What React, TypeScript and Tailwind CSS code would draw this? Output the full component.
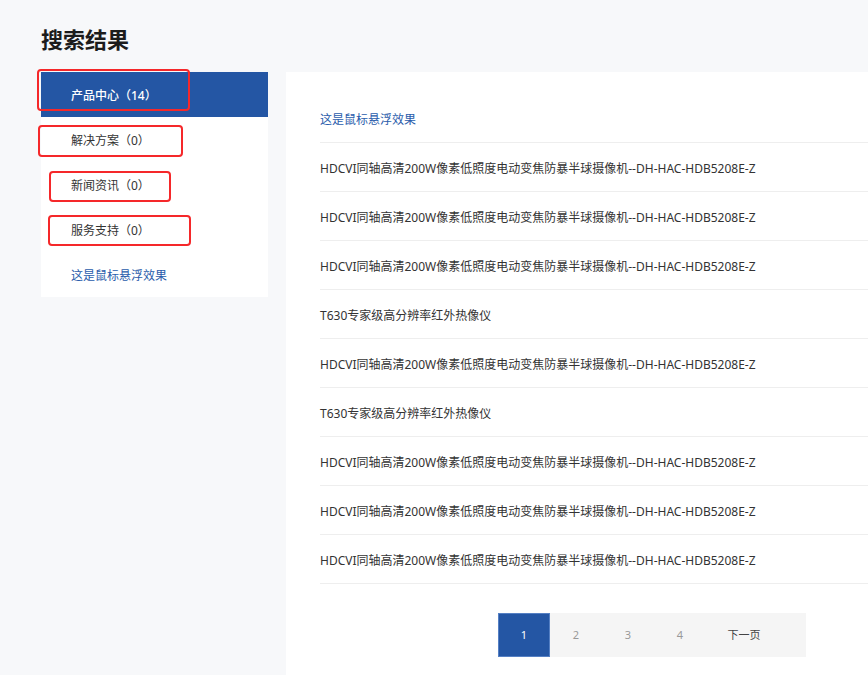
import React from 'react'

const categories = [
    { label: '产品中心（14）', active: true },
    { label: '解决方案（0）', active: false },
    { label: '新闻资讯（0）', active: false },
    { label: '服务支持（0）', active: false },
]

const camera = 'HDCVI同轴高清200W像素低照度电动变焦防暴半球摄像机--DH-HAC-HDB5208E-Z'
const thermal = 'T630专家级高分辨率红外热像仪'

const results = [camera, camera, camera, thermal, camera, thermal, camera, camera, camera]

// red annotation boxes drawn over the sidebar
const marks = [
    'left-[-4px] top-[-3px] w-[153px] h-[42px]',
    'left-[-3px] top-[53px] w-[145px] h-[32px]',
    'left-[8px] top-[99px] w-[122px] h-[31px]',
    'left-[7px] top-[143px] w-[143px] h-[31px]',
]

export default function App() {
    return (
        <div
            className="h-[675px] overflow-hidden bg-[#f7f8fa] pt-6 pl-[41px] text-[#333]"
            style={{ fontFamily: '"Noto Sans", "Noto Sans CJK SC", sans-serif' }}
        >
            <h1 className="mb-[18px] h-[30px] text-[22px] font-semibold leading-[30px] text-[#1c1c1c]">搜索结果</h1>
            <div className="flex items-start gap-[18px]">
                <div className="relative w-[227px] shrink-0 bg-white">
                    {categories.map((c) => (
                        <div
                            key={c.label}
                            className={
                                c.active
                                    ? 'flex h-[45px] items-center bg-[#2456a4] pt-[2px] pl-[30px] text-[12px] font-medium text-white'
                                    : 'flex h-[45px] items-center pt-[2px] pl-[30px] text-[12px]'
                            }
                        >
                            {c.label}
                        </div>
                    ))}
                    <div className="flex h-[45px] items-center pt-[2px] pl-[30px] text-[12px] text-[#2a5cab]">这是鼠标悬浮效果</div>
                    {marks.map((m) => (
                        <div key={m} className={'absolute rounded-[4px] border-2 border-[#f5282a] ' + m} />
                    ))}
                </div>
                <div className="min-w-0 flex-1 bg-white pt-[22px] pb-[20px] pl-[34px]">
                    <div className="flex h-[49px] items-center border-b border-[#eeeeee] pt-[3px] text-[12px] text-[#2a5cab]">
                        这是鼠标悬浮效果
                    </div>
                    {results.map((r, i) => (
                        <div
                            key={i}
                            className="flex h-[49px] items-center border-b border-[#eeeeee] pt-[3px] text-[12px] whitespace-nowrap"
                        >
                            {r}
                        </div>
                    ))}
                    <div className="mt-[29px] ml-[178px] flex h-[44px] w-[308px] bg-[#f5f5f5] text-[11px]">
                        <div className="flex w-[52px] items-center justify-center border border-[#5580c4] bg-[#2456a4] text-white">1</div>
                        {['2', '3', '4'].map((n) => (
                            <div key={n} className="flex w-[52px] items-center justify-center text-[#999]">
                                {n}
                            </div>
                        ))}
                        <div className="flex w-[76px] items-center justify-center text-[#444]">下一页</div>
                    </div>
                </div>
            </div>
        </div>
    )
}
